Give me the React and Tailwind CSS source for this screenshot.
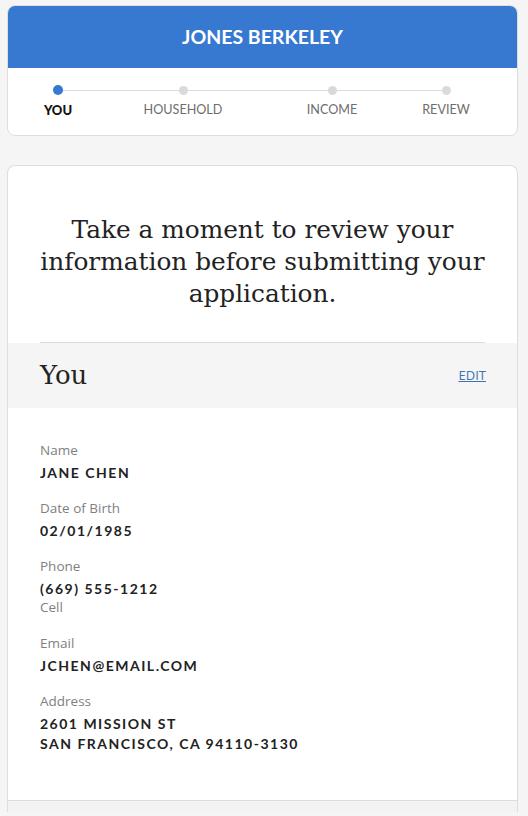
const steps = [
  { label: 'YOU', width: 'w-[78px]', active: true },
  { label: 'HOUSEHOLD', width: 'w-[172px]' },
  { label: 'INCOME', width: 'w-[126px]' },
  { label: 'REVIEW', width: 'w-[102px]' },
];

const fields = [
  { label: 'Name', value: ['JANE CHEN'] },
  { label: 'Date of Birth', value: ['02/01/1985'] },
  { label: 'Phone', value: ['(669) 555-1212'], note: 'Cell' },
  { label: 'Email', value: ['JCHEN@EMAIL.COM'] },
  { label: 'Address', value: ['2601 MISSION ST', 'SAN FRANCISCO, CA 94110-3130'] },
];

const lato = { fontFamily: 'Lato, "Open Sans", sans-serif' };
const openSans = { fontFamily: '"Open Sans", sans-serif' };
const serif = { fontFamily: '"DejaVu Serif", serif' };

const Stepper = () => (
  <div className="relative flex pl-[11px] pt-[17px] h-[67px]">
    <div className="absolute left-[49px] w-[388px] top-[22px] h-px bg-[#dcdcdc]" />
    {steps.map((s) => (
      <div key={s.label} className={`${s.width} flex flex-col items-center`}>
        <span
          className={
            s.active
              ? 'relative block w-[10px] h-[10px] rounded-full bg-[#3779d0]'
              : 'relative block w-[9px] h-[9px] mt-[0.5px] rounded-full bg-[#dadada]'
          }
        />
        <span
          className={
            s.active
              ? 'mt-[7px] text-[13px] leading-[16px] font-black text-[#111]'
              : 'mt-[7px] text-[12.6px] leading-[16px] font-normal text-[#6e6e6e]'
          }
        >
          {s.label}
        </span>
      </div>
    ))}
  </div>
);

const Field = ({ label, value, note }) => (
  <div>
    <div className="text-[13.5px] leading-[20px] text-[#808080]" style={openSans}>
      {label}
    </div>
    <div className="mt-[3px] text-[14px] leading-[20px] font-bold tracking-[1.5px] text-[#222]">
      {value.map((line) => (
        <div key={line}>{line}</div>
      ))}
    </div>
    {note && (
      <div className="text-[13.5px] leading-[17px] pb-[2px] text-[#808080]" style={openSans}>
        {note}
      </div>
    )}
  </div>
);

const App = () => {
  return (
    <div className="min-h-[816px] bg-[#f5f5f5] pl-[7px] pr-[10px] pt-[5px]" style={lato}>
      <div className="rounded-lg border border-[#dedede] bg-white overflow-hidden">
        <div className="h-[62px] bg-[#3779d0] flex items-center justify-center text-white text-[19.5px] font-bold">
          JONES BERKELEY
        </div>
        <Stepper />
      </div>

      <div className="mt-[29px] rounded-t-lg border border-b-0 border-[#dedede] bg-white">
        <div className="px-[32px] pt-[48px]">
          <h1 className="text-center text-[24.8px] leading-[32px] text-[#222] pb-[32px] border-b border-[#dcdcdc]" style={serif}>
            Take a moment to review your information before submitting your application.
          </h1>
        </div>
        <div className="h-[65px] bg-[#f5f5f5] flex items-center justify-between pl-[32px] pr-[31px]">
          <span className="text-[26px] text-[#222]" style={serif}>
            You
          </span>
          <a href="#" className="text-[13px] text-[#3d72b8] underline" style={openSans}>
            EDIT
          </a>
        </div>
        <div className="px-[32px] pt-[32px] pb-[46px] flex flex-col gap-[15px]">
          {fields.map((f) => (
            <Field key={f.label} {...f} />
          ))}
        </div>
        <div className="h-[12px] border-t border-[#dcdcdc] bg-[#f3f3f3]" />
      </div>
    </div>
  );
};

export default App;
